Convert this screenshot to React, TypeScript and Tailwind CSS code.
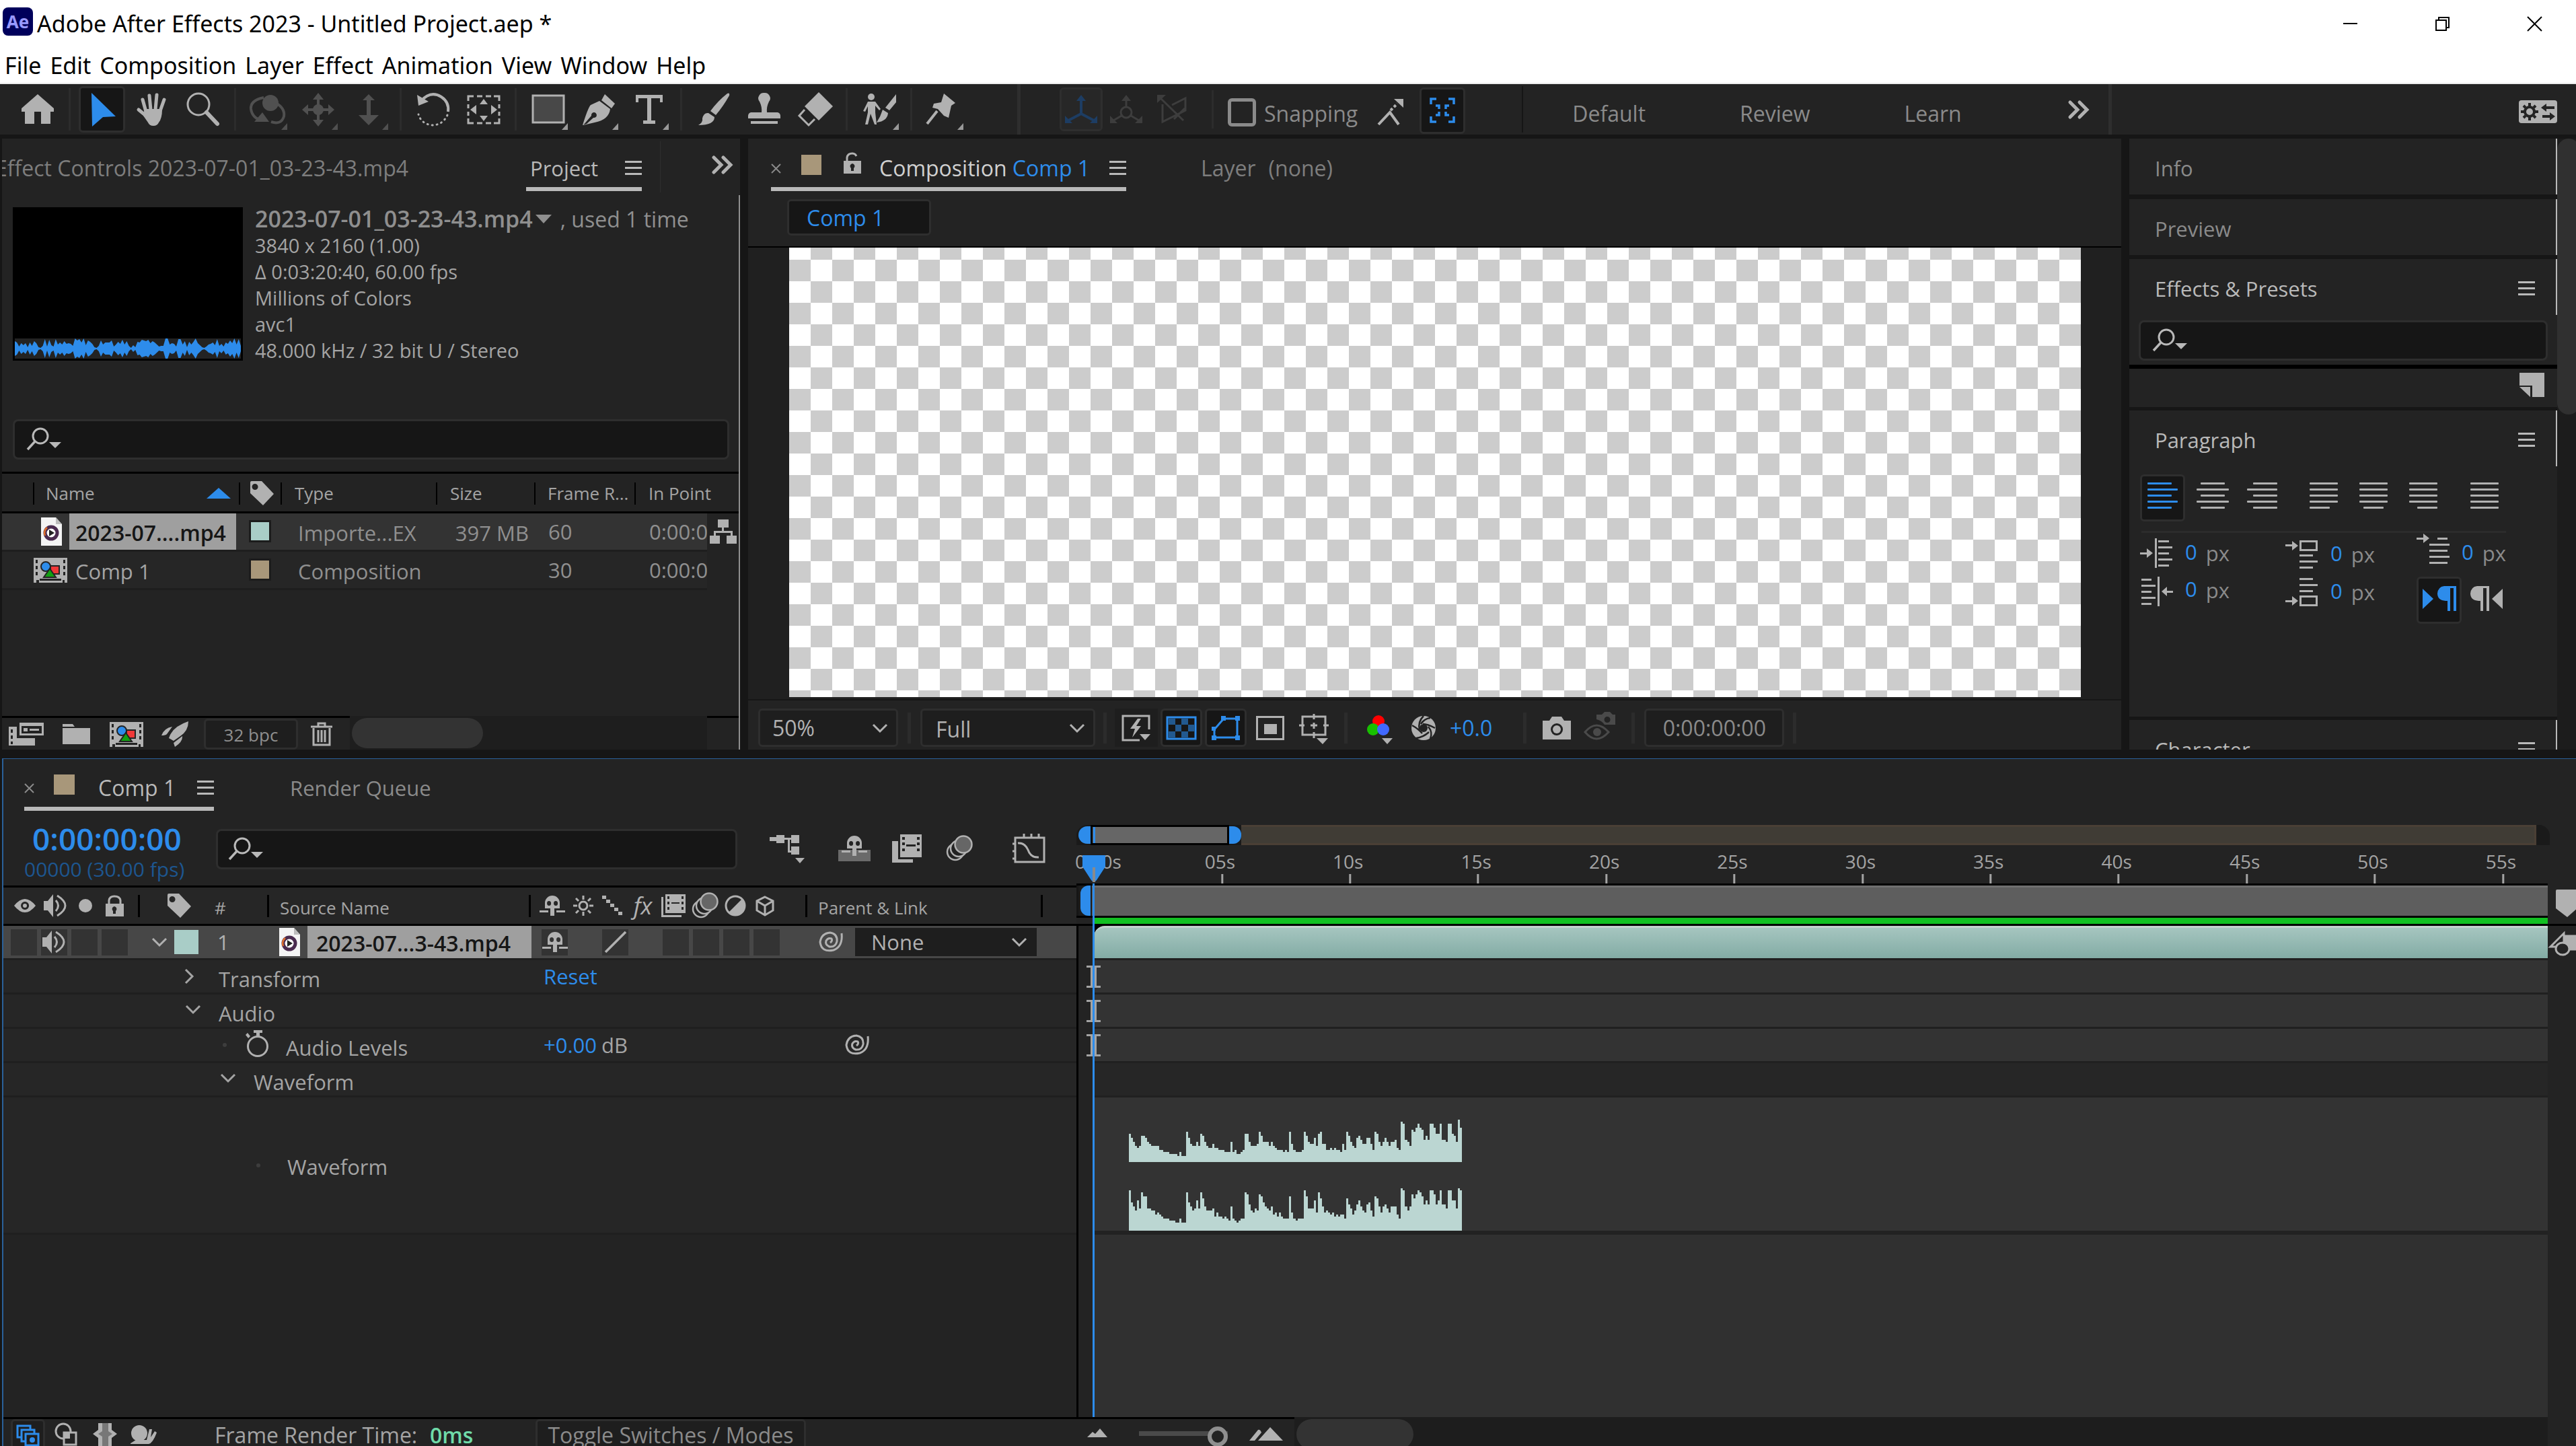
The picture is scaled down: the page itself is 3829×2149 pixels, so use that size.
import React, { useState } from 'react';

const MENUS = ['File', 'Edit', 'Composition', 'Layer', 'Effect', 'Animation', 'View', 'Window', 'Help'];

const LEFT_CHANNEL = [
  14, 12, 10, 8, 7, 8, 13, 13, 12, 10, 9, 8, 8, 8, 8, 6, 6, 5, 5, 5, 4, 4, 4, 4, 3, 5, 3, 3,
  15, 12, 9, 8, 8, 10, 8, 14, 13, 10, 8, 7, 7, 9, 7, 7, 6, 6, 6, 5, 5, 5, 10, 5, 6, 4, 4, 5, 6,
  14, 14, 10, 8, 8, 8, 9, 15, 13, 10, 10, 10, 8, 10, 8, 7, 6, 6, 6, 5, 6, 5, 15, 9, 6, 5, 5, 5, 6,
  15, 13, 10, 9, 9, 12, 8, 14, 15, 9, 9, 6, 6, 7, 6, 7, 6, 6, 5, 9, 6, 15, 13, 10, 8, 7, 12, 13, 11, 9,
  9, 12, 12, 9, 6, 15, 14, 10, 8, 10, 12, 10, 8, 10, 10, 11, 7, 6, 20, 19, 11, 10, 8, 16, 15, 17, 19, 17,
  16, 11, 13, 11, 19, 19, 17, 14, 14, 19, 11, 11, 10, 19, 19, 14, 13, 10, 21, 17,
];

const RIGHT_CHANNEL = [
  20, 14, 12, 10, 15, 11, 19, 17, 17, 11, 11, 10, 10, 8, 9, 8, 7, 6, 6, 6, 5, 5, 5, 4, 4, 6, 4, 4,
  19, 14, 12, 10, 11, 15, 11, 19, 16, 12, 10, 10, 10, 11, 7, 9, 7, 7, 6, 7, 6, 5, 12, 6, 5, 4, 5, 6, 6,
  19, 18, 13, 10, 9, 11, 10, 18, 17, 14, 12, 11, 10, 12, 8, 9, 7, 9, 7, 6, 6, 6, 17, 9, 6, 5, 6, 6, 6,
  20, 17, 11, 11, 11, 15, 9, 19, 16, 12, 9, 10, 9, 8, 9, 7, 8, 7, 8, 8, 6, 16, 13, 11, 8, 10, 13, 15, 12, 10,
  9, 13, 14, 10, 7, 17, 16, 12, 9, 12, 13, 11, 9, 12, 12, 12, 8, 6, 21, 20, 12, 10, 12, 18, 16, 18, 20, 19,
  17, 13, 15, 13, 20, 20, 18, 13, 15, 20, 13, 13, 11, 20, 20, 15, 15, 11, 21, 20,
];

const THUMB_WAVE = [
  11, 9, 3, 8, 5, 8, 2, 9, 4, 11, 8, 2, 1, 4, 14, 3, 13, 5, 3, 14, 6, 9, 6, 11, 7, 8, 7, 4, 15, 12, 14, 9, 15, 5,
  12, 10, 7, 2, 1, 4, 12, 6, 9, 9, 9, 12, 3, 6, 10, 7, 13, 6, 11, 4, 1, 5, 2, 10, 9, 13, 12, 11, 13, 8, 11, 9, 6,
  3, 4, 4, 15, 15, 6, 8, 7, 3, 14, 14, 6, 11, 2, 10, 6, 10, 15, 8, 5, 2, 1, 3, 6, 7, 9, 5, 14, 4, 7, 3, 9, 7, 12,
  8, 15, 6, 14, 4,
];

const SECONDS = [5, 10, 15, 20, 25, 30, 35, 40, 45, 50, 55];
const VISIBLE_SECONDS = 56.75;

const toClock = (s: number) => `${String(s).padStart(2, '0')}s`;

type SvgProps = { w: number; h: number; className?: string; children: React.ReactNode };

const Svg: React.FC<SvgProps> = ({ w, h, className = '', children }) => (
  <svg
    width={w}
    height={h}
    viewBox={`0 0 ${w} ${h}`}
    fill="currentColor"
    aria-hidden="true"
    className={`shrink-0 overflow-visible ${className}`}
  >
    {children}
  </svg>
);

const Burger = () => (
  <Svg w={25} h={22}>
    <path d="M0 0h25v3H0zM0 9h25v3H0zM0 18h25v3H0z" />
  </Svg>
);

const Cross = () => (
  <Svg w={15} h={15} className="text-[#8a8a8a]">
    <path d="M1 1l13 13M14 1L1 14" stroke="currentColor" strokeWidth="2" fill="none" />
  </Svg>
);

const Chevrons = () => (
  <Svg w={32} h={26} className="text-[#b1b1b1]">
    <path d="M3 2l11 11L3 24M17 2l11 11-11 11" stroke="currentColor" strokeWidth="5" fill="none" strokeLinecap="round" />
  </Svg>
);

const ChevronDown = ({ className = '' }: { className?: string }) => (
  <Svg w={24} h={14} className={className}>
    <path d="M2 2l10 10L22 2" stroke="currentColor" strokeWidth="3" fill="none" />
  </Svg>
);

const SearchGlyph = () => (
  <Svg w={52} h={34} className="text-[#b9b9b9]">
    <circle cx="20" cy="12" r="11" fill="none" stroke="currentColor" strokeWidth="3" />
    <path d="M12 20L1 32" stroke="currentColor" strokeWidth="3.5" />
    <path d="M33 21h18l-9 9z" />
  </Svg>
);

const Tag = () => (
  <Svg w={37} h={36} className="text-[#b1b1b1]">
    <path fillRule="evenodd" d="M1 2q0-2 2-2h15l18 19-16 17L1 18zm7 2a4.500 4.500 0 1 0 .1 9a4.500 4.500 0 0 0-.1-9z" />
  </Svg>
);

const MediaFile = () => (
  <Svg w={31} h={42}>
    <path d="M0 0h22l9 10v32H0z" fill="#f4f4f4" />
    <path d="M22 0l9 10h-9z" fill="#bdbdbd" />
    <circle cx="15" cy="23" r="9" fill="#fff" stroke="#4a2b4f" strokeWidth="5" />
    <path d="M6 27a10 10 0 0 1 3-12" stroke="#e2702c" strokeWidth="2.500" fill="none" />
    <path d="M12 18l8 5-8 5z" fill="#222" />
  </Svg>
);

const CompFile = () => (
  <Svg w={50} h={38} className="text-[#b1b1b1]">
    <path d="M0 1h50v37h-4v-4h-3v4H8v-4H4v4H0z" />
    <path d="M3 4h3v5H3zM3 13h3v5H3zM3 22h3v5H3zM44 4h3v5h-3zM44 13h3v5h-3zM44 22h3v5h-3zM9 32h32v3H9z" fill="#232323" />
    <path d="M25 13h13v12H25z" fill="#f03838" stroke="#232323" strokeWidth="2" />
    <circle cx="18" cy="14" r="7" fill="#2d8ceb" stroke="#232323" strokeWidth="2" />
    <path d="M24 17l9 13H15z" fill="#12a012" stroke="#232323" strokeWidth="2" />
  </Svg>
);

const Speaker = () => (
  <Svg w={36} h={34}>
    <path d="M0 10h6L14 0v34L6 24H0z" />
    <path d="M18 9q7 8 0 16M20 2q24 15 0 30" stroke="currentColor" strokeWidth="3" fill="none" />
  </Svg>
);

const Shy = () => (
  <Svg w={38} h={30}>
    <path fillRule="evenodd" d="M8 19v-8a11 11 0 0 1 22 0v8zm6-11a3 3.500 0 1 0 .1 7a3 3.500 0 0 0 0-7zm10 0a3 3.500 0 1 0 .1 7a3 3.500 0 0 0 0-7z" />
    <path d="M16 19h6v11h-6zM0 22h13v3H0zM25 22h13v3H25z" />
  </Svg>
);

const Film = () => (
  <Svg w={36} h={34}>
    <path fillRule="evenodd" d="M6 0h30v28H6zm3 3v4h3V3zm0 8v4h3v-4zm0 8v4h3v-4zM30 3v4h3V3zm0 8v4h3v-4zm0 8v4h3v-4zM15 12v2h12v-2z" />
    <path d="M0 4h3v27h27v3H0z" />
  </Svg>
);

const Blur = () => (
  <Svg w={40} h={38}>
    <circle cx="14" cy="24" r="12" fill="#232323" stroke="currentColor" strokeWidth="2.500" />
    <circle cx="19" cy="19" r="12" fill="#232323" stroke="currentColor" strokeWidth="2.500" />
    <circle cx="26" cy="13" r="12.500" fill="#666" stroke="currentColor" strokeWidth="2.500" />
  </Svg>
);

const Swirl = () => (
  <Svg w={35} h={30} className="text-[#b1b1b1]">
    <path
      d="M33 2q2 20-12 25Q3 31 1 15Q3 2 16 1Q27 3 26 14Q24 23 15 22Q8 19 10 13Q13 8 18 10Q20 13 16 16"
      fill="none"
      stroke="currentColor"
      strokeWidth="3"
    />
  </Svg>
);

const Corner = () => <path d="M57 45v10H48z" fill="#999" />;

const tools: Record<string, React.ReactNode> = {
  Home: <path d="M28 2l24 21v5h-5v18H33V28H23v18H9V28H4v-5z" />,
  Selection: <path d="M12 0l36 35-19 1-16 14z" fill="#2d8ceb" />,
  Hand: (
    <>
      <path d="M18 28L13 10M25 25L23 4M32 25l2-22M39 27l6-17M18 34L7 25" stroke="currentColor" strokeWidth="5" strokeLinecap="round" />
      <path d="M16 24h26q0 14-5 20q-2 5-8 5q-6 0-8-5L14 34z" />
    </>
  ),
  Zoom: (
    <>
      <circle cx="21" cy="17" r="16" fill="none" stroke="currentColor" strokeWidth="3" />
      <path d="M33 29l16 17" stroke="currentColor" strokeWidth="6" strokeLinecap="round" />
    </>
  ),
  Orbit: (
    <g color="#505050">
      <circle cx="32" cy="15" r="12" />
      <path d="M22 7Q2 11 3 24q2 14 17 17M40 15q14 8 12 20q-4 13-19 8" stroke="currentColor" strokeWidth="4" fill="none" />
      <path d="M20 29l10 14H8z" />
      <path d="M57 45v10H48z" />
    </g>
  ),
  Pan: (
    <g color="#505050">
      <circle cx="28" cy="25" r="8" />
      <path d="M28 8v34M11 25h34" stroke="currentColor" strokeWidth="4" />
      <path d="M28 0l8 10H20zM28 50l8-10H20zM4 25l9-8v16zM52 25l-9-8v16z" />
      <path d="M57 45v10H48z" />
    </g>
  ),
  Dolly: (
    <g color="#505050">
      <path d="M28 2l9 9h-6v22h12L28 48 13 33h12V11h-6z" />
      <path d="M57 45v10H48z" />
    </g>
  ),
  Rotate: (
    <>
      <path d="M10 12Q24-4 40 6q12 8 10 22" stroke="currentColor" strokeWidth="4" fill="none" />
      <path d="M4 3l2 16 15-6z" />
      <path d="M49 33Q42 48 26 48Q10 46 6 32" stroke="currentColor" strokeWidth="3" strokeDasharray="1 6" strokeLinecap="round" fill="none" />
    </>
  ),
  Anchor: (
    <>
      <path d="M5 12V5h8M43 5h8v7M5 38v7h8M43 45h8v-7M18 5h8M31 5h8M18 45h8M31 45h8M5 17v6M5 28v6M51 17v6M51 28v6" stroke="currentColor" strokeWidth="3" fill="none" />
      <path d="M28 9l6 8H22zM28 42l6-8H22zM8 25l9-7v14zM48 25l-9-7v14z" />
    </>
  ),
  Rectangle: (
    <>
      <path d="M5 4h46v40H5z" fill="#484848" stroke="currentColor" strokeWidth="3" />
      <Corner />
    </>
  ),
  Pen: (
    <>
      <path fillRule="evenodd" d="M29 12l16 12q-2 16-23 20L5 48l12-14a4 4 0 1 1 3 3L10 46L4 48q8-26 12-30z" />
      <path d="M37 2l15 14-5 7-15-12z" />
      <Corner />
    </>
  ),
  Type: (
    <>
      <path d="M8 3h40v11h-4V8H31v33h6v5H19v-5h6V8H12v6H8z" />
      <Corner />
    </>
  ),
  Brush: (
    <>
      <path d="M48 1q4-2 3 3Q42 20 31 33l-8-6Q34 12 48 1z" />
      <path d="M20 30l9 6q0 12-24 12q7-4 6-10q2-9 9-8z" />
    </>
  ),
  Stamp: <path d="M28 0a8 8 0 0 1 7 13q-4 8-3 16h16q5 1 4 9H4q-1-8 4-9h16q1-8-3-16A8 8 0 0 1 28 0zM8 42h40v4H8z" />,
  Eraser: (
    <>
      <path d="M34-1l21 21-21 21-21-21z" />
      <path d="M13 25L5 34l14 14 9-9" fill="none" stroke="currentColor" strokeWidth="3" />
    </>
  ),
  Roto: (
    <>
      <circle cx="16" cy="6" r="5" />
      <path d="M11 13h11l8 11-2 2-6-7v10l2 18h-3l-6-16-4 16H7l4-18v-9l-4 8-3-1z" />
      <path d="M53 2v12L43 26l-6-4zM33 25l8 5q-1 12-17 14q6-9 9-19z" />
      <Corner />
    </>
  ),
  Pin: (
    <>
      <path d="M28 1l17 14-6 4-4 18-7-3-9-10-8-2 2-6 11-2z" />
      <path d="M18 27L3 46" stroke="currentColor" strokeWidth="4" />
      <Corner />
    </>
  ),
};

const TOOL_GROUPS = [
  ['Home'],
  ['Selection', 'Hand', 'Zoom'],
  ['Orbit', 'Pan', 'Dolly'],
  ['Rotate', 'Anchor'],
  ['Rectangle', 'Pen', 'Type'],
  ['Brush', 'Stamp', 'Eraser'],
  ['Roto'],
  ['Pin'],
];

const TitleBar = () => (
  <header className="shrink-0 border-b-2 border-[#ececec] bg-white font-['Noto_Sans',sans-serif] text-[34px] leading-[46px] text-black">
    <div className="flex h-[70px] items-center pr-[51px] pl-1">
      <div className="mb-[6px] flex h-[42px] w-[45px] items-center justify-center rounded-lg bg-[#00005b] text-[26px] font-bold text-[#9999ff]">
        Ae
      </div>
      <h1 className="ml-[6px] flex-1">Adobe After Effects 2023 - Untitled Project.aep *</h1>
      <div className="flex items-center gap-[116px]">
        <button aria-label="Minimize">
          <Svg w={21} h={21}><path d="M0 9h21v2H0z" /></Svg>
        </button>
        <button aria-label="Restore">
          <Svg w={21} h={21}>
            <path d="M1 5h15v15H1zM5 5V1h15v15h-4" fill="none" stroke="currentColor" strokeWidth="2" />
          </Svg>
        </button>
        <button aria-label="Close">
          <Svg w={21} h={21}><path d="M0 0l21 21M21 0L0 21" stroke="currentColor" strokeWidth="2" /></Svg>
        </button>
      </div>
    </div>
    <nav className="flex h-[53px] items-center gap-[13px] pl-[7px]">
      {MENUS.map((m) => (
        <button key={m}>{m}</button>
      ))}
    </nav>
  </header>
);

const Divider = () => <span className="h-[63px] w-[3px] bg-[#2c2c2c]" />;

const Toolbar = () => {
  const [active, setActive] = useState('Selection');
  const [snapping, setSnapping] = useState(false);

  return (
    <div className="mb-[6px] flex h-[75px] shrink-0 items-center bg-[#232323] pl-[18px] text-[#b1b1b1]">
      <div className="flex items-center gap-[9px]">
        {TOOL_GROUPS.map((group, i) => (
          <React.Fragment key={group[0]}>
            {i > 0 && <Divider />}
            <div className="flex">
              {group.map((name) => (
                <button key={name} aria-label={`${name} Tool`} onClick={() => setActive(name)} className="flex w-[75px] justify-center">
                  <span
                    className={`flex h-[69px] w-[69px] items-center justify-center rounded-md border-[3px] ${
                      active === name ? 'border-[#2e2e2e] bg-[#161616]' : 'border-transparent'
                    }`}
                  >
                    <Svg w={56} h={50}>{tools[name]}</Svg>
                  </span>
                </button>
              ))}
            </div>
          </React.Fragment>
        ))}
      </div>

      <span className="ml-[72px] h-full w-[5px] bg-[#2e2e2e]" />

      <div className="ml-[58px] flex items-center">
        <button aria-label="Local Axis Mode" className="flex h-[65px] w-[64px] items-center justify-center rounded-md border-[3px] border-[#2e2e2e] bg-[#272727] text-[#1d3d63]">
          <Svg w={50} h={44}>
            <path d="M25 4v24M25 28L6 38M25 28l19 10" stroke="currentColor" strokeWidth="4" />
            <path d="M25 0l7 9H18zM1 42V31l11 11zM49 42V31L38 42z" />
          </Svg>
        </button>
        <button aria-label="World Axis Mode" className="flex w-[70px] justify-center text-[#3d3d3d]">
          <Svg w={50} h={44}>
            <path d="M25 4v14M18 31L6 38M32 31l12 7" stroke="currentColor" strokeWidth="3" />
            <circle cx="25" cy="26" r="8" fill="none" stroke="currentColor" strokeWidth="3" />
            <path d="M25 0l7 9H18zM1 42V31l11 11zM49 42V31L38 42z" />
          </Svg>
        </button>
        <button aria-label="View Axis Mode" className="flex w-[66px] justify-center text-[#3d3d3d]">
          <Svg w={44} h={44}>
            <path d="M5 5l34 33M8 14v26L42 23V5L22 15M25 36l16-16" fill="none" stroke="currentColor" strokeWidth="3" />
            <path d="M0 0h13L0 12z" />
          </Svg>
        </button>
      </div>
      <span className="mr-[21px] ml-[26px] h-[57px] w-[3px] bg-[#2c2c2c]" />

      <label className="flex items-center gap-3 text-[32px] leading-[42px] text-[#8a8a8a]">
        <input
          type="checkbox"
          checked={snapping}
          onChange={(e) => setSnapping(e.target.checked)}
          className="mt-[9px] h-[42px] w-[42px] appearance-none rounded-md border-[5px] border-[#8a8a8a] checked:bg-[#8a8a8a]"
        />
        <span className="mt-[12px]">Snapping</span>
      </label>
      <button aria-label="Snap to edges" className="mt-[6px] ml-[30px]">
        <Svg w={38} h={40}>
          <path d="M1 39L18 21l13 18" fill="none" stroke="currentColor" strokeWidth="4" />
          <path d="M19 18l10-10" stroke="currentColor" strokeWidth="4" strokeDasharray="4 3" />
          <path d="M24 1h14v13z" />
        </Svg>
      </button>
      <button aria-label="Snap to features" className="mt-[3px] ml-[24px] flex h-[69px] w-[68px] items-center justify-center rounded-md border-[3px] border-[#2e2e2e] bg-[#161616] text-[#2d8ceb]">
        <Svg w={38} h={38}>
          <path d="M2 10V2h8M28 2h8v8M2 28v8h8M28 36h8v-8M9 12h5v5M29 12h-5v5M9 26h5v-5M29 26h-5v-5" fill="none" stroke="currentColor" strokeWidth="3.500" />
        </Svg>
      </button>

      <span className="ml-[84px] h-[69px] w-[2px] bg-[#161616]" />
      <nav className="mt-[13px] ml-[73px] flex gap-[140px] text-[32px] leading-[42px] text-[#8a8a8a]">
        <button>Default</button>
        <button>Review</button>
        <button>Learn</button>
      </nav>
      <button aria-label="More workspaces" className="ml-[158px]">
        <Chevrons />
      </button>
      <span className="ml-[28px] h-full w-[5px] bg-[#2e2e2e]" />
      <div className="flex-1" />
      <button aria-label="Workspace settings" className="mt-[6px] mr-[28px]">
        <Svg w={57} h={34}>
          <rect width="57" height="34" rx="4" />
          <circle cx="16" cy="17" r="7" fill="none" stroke="#232323" strokeWidth="4" />
          <path d="M16 4v5M16 25v5M3 17h5M24 17h5M7 8l3 3M22 23l3 3M25 8l-3 3M7 26l3-3" stroke="#232323" strokeWidth="4" />
          <path d="M33 11l8-6v4h12v4H41v4zM54 24l-8-6v4H35v4h11v4z" fill="#232323" />
        </Svg>
      </button>
    </div>
  );
};

const PROJECT_ROWS = [
  { name: '2023-07....mp4', type: 'Importe...EX', size: '397 MB', rate: '60', start: '0:00:0', media: true },
  { name: 'Comp 1', type: 'Composition', size: '', rate: '30', start: '0:00:0', media: false },
];

const ProjectPanel = () => {
  const wave =
    THUMB_WAVE.map((v, i) => `${i * 3},${15 - v}`).join(' ') +
    ' ' +
    [...THUMB_WAVE].map((v, i) => `${i * 3},${15 + v}`).reverse().join(' ');

  return (
    <section className="flex w-[1097px] shrink-0 flex-col overflow-hidden bg-[#232323]">
      <div className="flex h-[84px] items-start text-[31px] leading-[42px]">
        <div className="flex h-[78px] w-[604px] items-center justify-end overflow-hidden pt-[10px] text-[32px] whitespace-nowrap text-[#7d7d7d]">
          Effect Controls 2023-07-01_03-23-43.mp4
        </div>
        <div className="ml-[175px] flex h-[78px] w-[172px] items-center justify-between border-b-[6px] border-[#b9b9b9] pt-[16px] pl-[6px] text-[#b9b9b9]">
          Project <Burger />
        </div>
        <span className="mt-1 ml-[27px] h-[76px] w-px bg-[#2e2e2e]" />
        <button aria-label="More tabs" className="mt-[26px] ml-[76px]">
          <Chevrons />
        </button>
      </div>

      <div className="flex min-h-0 flex-1 flex-col border-r-2 border-[#8f8f8f]">
        <div className="flex h-[333px] pt-[16px] pl-4">
          <div className="mt-[2px] flex h-[228px] w-[342px] flex-col justify-end bg-black px-[3px] pb-[3px]">
            <svg viewBox="0 0 315 30" preserveAspectRatio="none" className="h-[30px] w-full bg-[#232323]" aria-hidden="true">
              <polygon points={wave} fill="#2d8ceb" />
            </svg>
          </div>
          <div className="ml-[18px] text-[29px] leading-[39px] text-[#a4a4a4]">
            <p className="flex items-center text-[32px] text-[#8f8f8f]">
              <button className="flex items-center gap-1 text-[34px] font-semibold">
                2023-07-01_03-23-43.mp4
                <Svg w={24} h={13}><path d="M0 0h24L12 13z" /></Svg>
              </button>
              <span className="ml-[13px]">, used 1 time</span>
            </p>
            <p>3840 x 2160 (1.00)</p>
            <p>Δ 0:03:20:40, 60.00 fps</p>
            <p>Millions of Colors</p>
            <p>avc1</p>
            <p>48.000 kHz / 32 bit U / Stereo</p>
          </div>
        </div>

        <label className="mr-[14px] ml-4 flex h-[60px] items-center rounded-lg border-[3px] border-[#2e2e2e] bg-[#161616] pl-[18px]">
          <SearchGlyph />
          <input type="search" aria-label="Search project" className="w-full bg-transparent px-3 text-[31px] text-[#b9b9b9] outline-none" />
        </label>

        <div className="mt-[18px] min-h-0 flex-1 overflow-hidden border-t-[3px] border-black">
          <table className="w-full table-fixed border-collapse text-left">
            <colgroup>
              <col className="w-[354px]" />
              <col className="w-[62px]" />
              <col className="w-[231px]" />
              <col className="w-[146px]" />
              <col className="w-[149px]" />
              <col className="w-[106px]" />
              <col />
            </colgroup>
            <thead>
              <tr className="h-[57px] border-b-[3px] border-black text-[26px] leading-[34px] text-[#a4a4a4] [&>th]:p-0 [&>th]:pt-[3px] [&>th]:font-normal">
                <th scope="col">
                  <span className="ml-[46px] flex h-[33px] items-center justify-between border-r-2 border-l-2 border-black pr-[12px] pl-[17px]">
                    Name
                    <Svg w={36} h={16} className="text-[#2d8ceb]"><path d="M18 0l18 16H0z" /></Svg>
                  </span>
                </th>
                <th scope="col" aria-label="Label">
                  <span className="flex h-[33px] items-center border-r-2 border-black pl-[14px]"><Tag /></span>
                </th>
                <th scope="col"><span className="flex h-[33px] items-center border-r-2 border-black pl-[19px]">Type</span></th>
                <th scope="col"><span className="flex h-[33px] items-center border-r-2 border-black pl-[19px]">Size</span></th>
                <th scope="col"><span className="flex h-[33px] items-center border-r-2 border-black pl-[18px]">Frame R...</span></th>
                <th scope="col" colSpan={2}><span className="flex h-[33px] items-center pl-[19px]">In Point</span></th>
              </tr>
            </thead>
            <tbody>
              {PROJECT_ROWS.map((row) => (
                <tr
                  key={row.name}
                  className={`h-[57px] text-[31px] leading-[42px] text-[#8f8f8f] [&>td]:p-0 ${row.media ? 'bg-[#333333]' : 'bg-[#262626]'}`}
                >
                  <td className="border-b-[3px] border-[#1e1e1e]">
                    <div className="flex h-[54px] items-center">
                      <span className="flex w-[100px] items-center justify-end pr-[3px]">
                        {row.media ? <span className="mr-[8px]"><MediaFile /></span> : <CompFile />}
                      </span>
                      <span
                        className={`flex h-full w-[248px] items-center pt-1 pl-[9px] ${
                          row.media ? 'bg-[#9f9f9f] text-[32px] font-semibold text-[#161616]' : 'text-[#a4a4a4]'
                        }`}
                      >
                        {row.name}
                      </span>
                    </div>
                  </td>
                  <td className="border-b-[3px] border-[#1e1e1e]">
                    <span className={`ml-[13px] block h-[33px] w-[33px] border-[3px] border-[#1c1c1c] ${row.media ? 'bg-[#a9cdc7]' : 'bg-[#a8977a]'}`} />
                  </td>
                  <td className="border-b-[3px] border-[#1e1e1e]"><div className="pt-1 pl-[24px]">{row.type}</div></td>
                  <td className="border-b-[3px] border-[#1e1e1e]"><div className="pt-1 pr-[10px] text-right">{row.size}</div></td>
                  <td className="border-b-[3px] border-[#1e1e1e]"><div className="pl-[19px]">{row.rate}</div></td>
                  <td className="overflow-hidden border-b-[3px] border-[#1e1e1e]"><div className="pl-[20px]">{row.start}</div></td>
                  <td className="bg-[#232323] text-[#b1b1b1]">
                    {row.media && (
                      <button aria-label="Flowchart" className="flex w-full justify-center">
                        <Svg w={40} h={36}>
                          <path d="M12 0h16v12H12zM0 24h15v12H0zM25 24h15v12H25zM18 12h3v5h13v7h-3v-4H9v4H6v-7h12z" />
                        </Svg>
                      </button>
                    )}
                  </td>
                </tr>
              ))}
            </tbody>
          </table>
        </div>

        <div className="flex h-[50px] shrink-0 text-[#b1b1b1]">
          <div className="flex w-[517px] items-center border-t-[3px] border-black pl-[10px]">
            <button aria-label="Interpret Footage">
              <Svg w={52} h={34}>
                <path fillRule="evenodd" d="M16 0h36v19H16zm3 5v11h30V5z" />
                <path d="M22 8h6v5h-6zM31 9h14v3H31zM0 6h12v17h27v11H0z" />
                <path d="M3 10h3v5H3zM3 19h3v5H3zM3 28h3v4H3z" fill="#232323" />
              </Svg>
            </button>
            <button aria-label="New Folder" className="ml-[28px]">
              <Svg w={41} h={30}><path d="M0 0h15l3 4H0zM0 6h41v24H0z" /></Svg>
            </button>
            <button aria-label="New Composition" className="ml-[29px]"><CompFile /></button>
            <button aria-label="Project Settings" className="ml-[27px]">
              <Svg w={40} h={38}>
                <path d="M40 0q0 14-12 22L18 29l-7-4Q16 8 40 0zM16 8Q4 10 0 21q6 0 8-2zM31 22q1 8-11 16l-2-6z" />
              </Svg>
            </button>
            <button className="ml-[23px] h-[46px] w-[140px] rounded-md border-[3px] border-[#2e2e2e] bg-[#1e1e1e] pt-[3px] text-[26px] leading-[36px] text-[#8f8f8f]">
              32 bpc
            </button>
            <button aria-label="Delete" className="ml-[18px]">
              <Svg w={34} h={36}>
                <path d="M5 9v25h24V9M1 7h32M12 6V2h10v4M12 12v18M17 12v18M22 12v18" fill="none" stroke="currentColor" strokeWidth="3" />
              </Svg>
            </button>
          </div>
          <div className="flex w-[531px] items-center bg-[#1e1e1e] pl-[3px]">
            <span className="h-[45px] w-[195px] rounded-full bg-[#333333]" />
          </div>
          <div className="flex-1 border-t-[3px] border-black" />
        </div>
      </div>
    </section>
  );
};

const Bar = () => <span className="h-[46px] w-[5px] bg-[#2c2c2c]" />;

const CompositionPanel = () => (
  <section className="flex min-w-0 flex-1 flex-col bg-[#232323]">
    <div className="flex h-[84px] pl-[34px] text-[32px] leading-[42px]">
      <div className="flex h-[78px] w-[528px] items-center border-b-[6px] border-[#b9b9b9] pt-[16px] text-[#d0d0d0]">
        <button aria-label="Close tab"><Cross /></button>
        <span className="mb-[10px] ml-[30px] h-[30px] w-[30px] bg-[#a8977a]" />
        <Svg w={26} h={32} className="mb-[16px] ml-[33px] text-[#b1b1b1]">
          <path fillRule="evenodd" d="M0 13h26v19H0zm13 4a4 4 0 0 0-2 7v4h4v-4a4 4 0 0 0-2-7z" />
          <path d="M5 13V8q1-6 8-6q4 0 6 4" fill="none" stroke="currentColor" strokeWidth="3" />
        </Svg>
        <span className="ml-[27px]">Composition <span className="text-[#2d8ceb]">Comp 1</span></span>
        <span className="ml-auto text-[#b9b9b9]"><Burger /></span>
      </div>
      <div className="ml-[111px] flex h-[78px] items-center gap-[19px] pt-[10px] text-[#7d7d7d]">
        <span>Layer</span>
        <span>(none)</span>
      </div>
    </div>

    <div className="h-[76px] pt-[6px] pl-[58px]">
      <button className="h-[54px] w-[214px] rounded-md border-[3px] border-[#2e2e2e] bg-[#161616] pl-[26px] text-left text-[32px] leading-[50px] text-[#2d8ceb]">
        Comp 1
      </button>
    </div>

    <div className="min-h-0 flex-1 border-t-2 border-b-2 border-t-black border-b-[#161616] bg-[#202020] pr-[60px] pb-[3px] pl-[61px]">
      <div className="h-full bg-[conic-gradient(#cccccc_25%,#ffffff_0_50%,#cccccc_0_75%,#ffffff_0)] bg-[length:64px_64px] bg-[position:0_-14px]" />
    </div>

    <div className="flex h-[73px] items-center pt-[8px] pl-[15px] text-[32px] leading-[42px] text-[#b1b1b1]">
      <div className="relative flex items-center">
        <select aria-label="Magnification ratio" className="h-[57px] w-[208px] appearance-none rounded-md border-[3px] border-[#2e2e2e] bg-[#1e1e1e] pl-[18px]">
          <option>50%</option>
          <option>100%</option>
        </select>
        <ChevronDown className="pointer-events-none absolute right-[15px]" />
      </div>
      <span className="w-[14px]" />
      <Bar />
      <span className="w-[14px]" />
      <div className="relative flex items-center">
        <select aria-label="Resolution" className="h-[57px] w-[260px] appearance-none rounded-md border-[3px] border-[#2e2e2e] bg-[#1e1e1e] pt-[4px] pl-[20px]">
          <option>Full</option>
          <option>Half</option>
        </select>
        <ChevronDown className="pointer-events-none absolute right-[15px]" />
      </div>
      <span className="w-[12px]" />
      <Bar />
      <button aria-label="Fast Previews" className="ml-[12px] flex h-[57px] w-[64px] items-center justify-center bg-[#1e1e1e]">
        <Svg w={44} h={40}>
          <path d="M41 22V2H2v36h25" fill="none" stroke="currentColor" strokeWidth="3" />
          <path d="M24 6L13 21h7l-4 13 13-17h-7l7-11zM27 29h16l-8 9z" />
        </Svg>
      </button>
      <button aria-label="Transparency Grid" className="ml-[4px] flex h-[57px] w-[62px] items-center justify-center rounded-md border-[3px] border-[#2e2e2e] bg-[#161616] text-[#2d8ceb]">
        <Svg w={44} h={34}>
          <path d="M1 1h42v32H1z" fill="#161616" stroke="currentColor" strokeWidth="3" />
          <path d="M3 3h10v9H3zM22 3h10v9H22zM13 12h9v10h-9zM32 12h9v10h-9zM3 22h10v9H3zM22 22h10v9H22z" fill="#22598f" />
        </Svg>
      </button>
      <button aria-label="Mask Visibility" className="ml-[4px] flex h-[57px] w-[62px] items-center justify-center rounded-md border-[3px] border-[#2e2e2e] bg-[#161616] text-[#2d8ceb]">
        <Svg w={42} h={36}>
          <path d="M4 32V20L18 4h20v28z" fill="none" stroke="currentColor" strokeWidth="3" />
          <path d="M0 29h7v7H0zM35 29h7v7h-7zM35 0h7v7h-7zM14 0h7v7h-7zM0 16h6v6H0z" />
        </Svg>
      </button>
      <button aria-label="Region of Interest" className="ml-[14px]">
        <Svg w={42} h={36}>
          <path fillRule="evenodd" d="M0 0h42v36H0zm3 3v30h36V3z" />
          <path d="M12 12h19v15H12z" />
        </Svg>
      </button>
      <button aria-label="Grid and Guides" className="ml-[22px]">
        <Svg w={44} h={42}>
          <path d="M5 4h34v27H5zM22 0v8M22 13v9M22 27v9M0 17h8M17 17h10M36 17h8" fill="none" stroke="currentColor" strokeWidth="3" />
          <path d="M26 36h17l-8 9z" />
        </Svg>
      </button>
      <span className="w-[23px]" />
      <Bar />
      <button aria-label="Show Channel" className="ml-[28px]">
        <Svg w={36} h={42}>
          <circle cx="18" cy="11" r="9" fill="#ff0000" />
          <circle cx="10" cy="23" r="9" fill="#18c000" />
          <circle cx="25" cy="23" r="9" fill="#4169ff" />
          <path d="M23 36h16l-8 9z" />
        </Svg>
      </button>
      <button aria-label="Reset Exposure" className="ml-[30px]">
        <Svg w={38} h={38}>
          <circle cx="19" cy="19" r="18" />
          <circle cx="19" cy="19" r="6" fill="#232323" />
          <path d="M19 1q-9 9-6 21M2 15q9 5 15 12M8 34q10-1 19-9M29 35q4-10-3-18M36 19q-11-6-18-6M29 4q-9 1-14 9" fill="none" stroke="#232323" strokeWidth="2.500" />
        </Svg>
      </button>
      <button className="ml-[20px] text-[#2d8ceb]">+0.0</button>
      <span className="w-[46px]" />
      <Bar />
      <button aria-label="Take Snapshot" className="ml-[24px]">
        <Svg w={42} h={34}>
          <path fillRule="evenodd" d="M0 6h10l4-6h14l4 6h10v28H0zm21 4a9 9 0 1 0 .1 18a9 9 0 0 0 0-18z" />
          <circle cx="21" cy="19" r="6" />
        </Svg>
      </button>
      <button aria-label="Show Snapshot" className="mb-[6px] ml-[20px] text-[#4a4a4a]">
        <Svg w={48} h={40}>
          <path d="M1 29q17-20 35 0q-18 20-35 0z" fill="none" stroke="currentColor" strokeWidth="3" />
          <circle cx="19" cy="29" r="6" />
          <path fillRule="evenodd" d="M18 3h8l4-4h8l4 4h4v15h-16q-4-6-12-8zm16 3a4 4 0 1 0 .1 9a4 4 0 0 0 0-9z" />
        </Svg>
      </button>
      <span className="w-[22px]" />
      <Bar />
      <button className="ml-[14px] h-[57px] w-[208px] rounded-md border-[3px] border-[#2e2e2e] bg-[#1e1e1e] text-[#8a8a8a]">
        0:00:00:00
      </button>
      <span className="w-[13px]" />
      <Bar />
    </div>
  </section>
);

// Each paragraph icon is five strokes given as [start, end].
const ALIGNMENTS = [
  { name: 'Left align', lines: [[0, 36], [0, 45], [0, 36], [0, 45], [0, 36]] },
  { name: 'Center', lines: [[6, 42], [0, 48], [6, 42], [0, 48], [6, 42]] },
  { name: 'Right align', lines: [[9, 45], [0, 45], [9, 45], [0, 45], [9, 45]] },
  { name: 'Justify last left', lines: [[0, 42], [0, 42], [0, 42], [0, 42], [0, 30]] },
  { name: 'Justify last centered', lines: [[0, 42], [0, 42], [0, 42], [0, 42], [6, 36]] },
  { name: 'Justify last right', lines: [[0, 42], [0, 42], [0, 42], [0, 42], [12, 42]] },
  { name: 'Justify all', lines: [[0, 42], [0, 42], [0, 42], [0, 42], [0, 42]] },
];

const Indent = ({ label, icon }: { label: string; icon: React.ReactNode }) => (
  <div className="flex items-center text-[31px] leading-[40px]">
    <Svg w={48} h={46}>{icon}</Svg>
    <button aria-label={label} className="mb-[4px] ml-[19px] text-[#2d8ceb]">0</button>
    <span className="ml-[13px] text-[#8a8a8a]">px</span>
  </div>
);

const PanelHeader = ({ title, menu = false }: { title: string; menu?: boolean }) => (
  <div className="flex h-[83px] shrink-0 items-center justify-between border-r-2 border-[#b9b9b9] pt-[4px] pr-[31px] pl-[38px] text-[31px] leading-[42px]">
    <h2 className={menu ? 'text-[#b9b9b9]' : 'text-[#8a8a8a]'}>{title}</h2>
    {menu && (
      <button aria-label={`${title} menu`} className="text-[#b9b9b9]">
        <Burger />
      </button>
    )}
  </div>
);

const SidePanels = () => {
  const [align, setAlign] = useState('Left align');

  return (
    <aside className="flex w-[664px] shrink-0">
      <div className="flex w-[636px] flex-col overflow-hidden text-[#b9b9b9]">
        <div className="mb-[7px] shrink-0 bg-[#232323]"><PanelHeader title="Info" /></div>
        <div className="mb-[6px] shrink-0 bg-[#232323]"><PanelHeader title="Preview" /></div>
        <div className="mb-[5px] shrink-0 bg-[#232323]">
          <PanelHeader title="Effects & Presets" menu />
          <label className="mx-[14px] mt-[8px] flex h-[60px] items-center rounded-lg border-[3px] border-[#2e2e2e] bg-[#161616] pl-[18px]">
            <SearchGlyph />
            <input type="search" aria-label="Search effects" className="w-full bg-transparent px-3 text-[31px] outline-none" />
          </label>
          <div className="mt-[6px] flex h-[63px] items-center justify-end border-t-[6px] border-black pr-[19px]">
            <button aria-label="New bin" className="mb-[10px]">
              <Svg w={37} h={36} className="text-[#b1b1b1]">
                <path d="M0 0h37v36H19V19H0zM0 21h16v15z" />
              </Svg>
            </button>
          </div>
        </div>
        <div className="mb-[5px] h-[455px] shrink-0 bg-[#232323]">
          <PanelHeader title="Paragraph" menu />
          <div className="mt-[12px] flex items-center pl-[16px]">
            {ALIGNMENTS.map((a, i) => (
              <button
                key={a.name}
                aria-label={a.name}
                onClick={() => setAlign(a.name)}
                className={`flex h-[70px] w-[67px] items-center justify-center rounded-md border-[3px] ${i === 3 || i === 6 ? 'ml-[24px]' : i > 0 ? 'ml-[7px]' : ''} ${
                  align === a.name ? 'border-[#2e2e2e] bg-[#161616] text-[#2d8ceb]' : 'border-transparent text-[#b1b1b1]'
                }`}
              >
                <Svg w={a.lines[1][1]} h={46}>
                  {a.lines.map(([from, to], n) => (
                    <rect key={n} x={from} y={n * 9} width={to - from} height="3" rx="1" />
                  ))}
                </Svg>
              </button>
            ))}
          </div>
          <hr className="mt-[14px] mr-[76px] ml-[18px] border-t-[3px] border-[#2c2c2c]" />
          <div className="flex pt-[7px] pl-[16px] text-[#b1b1b1]">
            <div className="w-[216px]">
              <Indent
                label="Indent left margin"
                icon={
                  <>
                    <path d="M22 1h3v44h-3zM27 4h16v3H27zM27 13h21v3H27zM27 22h16v3H27zM27 31h21v3H27zM27 40h16v3H27z" />
                    <path d="M0 22h10v-6l9 7-9 7v-5H0z" />
                  </>
                }
              />
              <div className="mt-[9px]">
                <Indent
                  label="Indent right margin"
                  icon={
                    <>
                      <path d="M26 3h3v44h-3zM2 6h15v3H2zM2 15h21v3H2zM2 24h15v3H2zM2 33h21v3H2zM2 42h15v3H2z" />
                      <path d="M49 24H40v-6l-8 7 8 7v-5h9z" />
                    </>
                  }
                />
              </div>
            </div>
            <div className="w-[195px] pt-[2px]">
              <Indent
                label="Add space before paragraph"
                icon={
                  <>
                    <path fillRule="evenodd" d="M21 2h27v16H21zm3 3v10h21V5zM21 23h20v3H21zM21 32h27v3H21zM21 41h20v3H21z" />
                    <path d="M0 8h10V3l9 7-9 7v-6H0z" />
                  </>
                }
              />
              <div className="mt-[10px]">
                <Indent
                  label="Add space after paragraph"
                  icon={
                    <>
                      <path fillRule="evenodd" d="M21 28h27v16H21zm3 3v10h21V31zM21 2h20v3H21zM21 11h27v3H21zM21 20h20v3H21z" />
                      <path d="M0 35h10v-6l9 7-9 7v-5H0z" />
                    </>
                  }
                />
              </div>
            </div>
            <div>
              <Indent
                label="Indent first line"
                icon={
                  <>
                    <path d="M31 0h15v3H31zM19 9h30v3H19zM19 18h27v3H19zM19 27h30v3H19zM19 36h27v3H19z" />
                    <path d="M0 0h10v-6l9 7-9 7V3H0z" />
                  </>
                }
              />
              <div className="mt-[12px] flex items-center gap-[12px]">
                <button aria-label="Left-to-right text" className="flex h-[70px] w-[67px] items-center justify-center rounded-md border-[3px] border-[#2e2e2e] bg-[#161616] text-[#2d8ceb]">
                  <Svg w={50} h={42}>
                    <path d="M0 4l16 15L0 34zM32 0h18v37h-4V3h-5v34h-4V22h-3q-12-1-12-11Q23 1 32 0z" />
                  </Svg>
                </button>
                <button aria-label="Right-to-left text" className="flex items-center">
                  <Svg w={50} h={42}>
                    <path d="M49 4L33 19l16 15zM11 0h18v37h-4V3h-5v34h-4V22h-3Q1 21 1 11Q2 1 11 0z" />
                  </Svg>
                </button>
              </div>
            </div>
          </div>
        </div>
        <div className="shrink-0 bg-[#232323]"><PanelHeader title="Character" menu /></div>
      </div>
      <div className="w-[28px] overflow-hidden bg-[#1c1c1c]">
        <span className="block h-[410px] w-[34px] rounded-full bg-[#303030]" />
      </div>
    </aside>
  );
};

const Cell = ({ children, empty = false }: { children?: React.ReactNode; empty?: boolean }) => (
  <span className={`flex h-[39px] w-[39px] items-center justify-center ${empty ? '' : 'bg-[#333333]'}`}>{children}</span>
);

const HeaderBar = () => <span className="h-[33px] w-[3px] shrink-0 bg-black" />;

const PropertyRow = ({ indent, children }: { indent: string; children: React.ReactNode }) => (
  <div className={`flex h-[51px] items-center border-b-[3px] border-[#1f1f1f] bg-[#262626] text-[#a4a4a4] ${indent}`}>{children}</div>
);

const LayerList = () => (
  <div className="flex w-[1595px] shrink-0 flex-col text-[31px] leading-[42px]">
    <div className="flex h-[111px] text-[#b1b1b1]">
      <div className="w-[316px] pt-[15px]">
        <p className="pl-[43px] text-[46px] leading-[52px] font-semibold text-[#2d8ceb]">0:00:00:00</p>
        <p className="pl-[31px] text-[30px] leading-[39px] whitespace-nowrap text-[#1d5690]">00000 (30.00 fps)</p>
      </div>
      <label className="mt-[27px] flex h-[60px] w-[775px] items-center rounded-lg border-[3px] border-[#2e2e2e] bg-[#161616] pl-[16px]">
        <SearchGlyph />
        <input type="search" aria-label="Search layers" className="w-full bg-transparent px-3 outline-none" />
      </label>
      <div className="ml-[48px] flex h-[112px] items-center">
        <button aria-label="Mini-Flowchart">
          <Svg w={52} h={40}>
            <path d="M0 3h12v6H0zM10 0h12v12H10zM32 0h12v12H32zM22 4h10v3H22zM27 6h3v17h4v3h-7zM32 17h12v12H32zM38 34h14l-7 8z" />
          </Svg>
        </button>
        <button aria-label="Hide shy layers" className="ml-[50px] flex h-[38px] w-[48px] justify-center bg-[linear-gradient(transparent_55%,#6a6a6a_0)]"><Shy /></button>
        <button aria-label="Frame blending" className="ml-[32px]">
          <Svg w={44} h={42}>
            <path fillRule="evenodd" d="M12 0h32v34H12zm3 4v4h4V4zm0 8v4h4v-4zm0 9v4h4v-4zM37 4v4h4V4zm0 8v4h4v-4zm0 9v4h4v-4zM21 15v3h14v-3z" />
            <path d="M0 10h9v27h22v5H0z" />
          </Svg>
        </button>
        <button aria-label="Motion blur" className="ml-[36px]"><Blur /></button>
        <button aria-label="Graph Editor" className="ml-[59px]">
          <Svg w={50} h={44}>
            <path d="M4 6h43v36H4z" fill="none" stroke="currentColor" strokeWidth="3" />
            <path d="M8 14q10-1 15 10q4 12 16 11M17 0v6M28 0v6M39 0v6M0 15h4M0 26h4M0 37h4" fill="none" stroke="currentColor" strokeWidth="3" />
          </Svg>
        </button>
      </div>
    </div>

    <div className="flex h-[60px] items-center border-y-[3px] border-black bg-[#262626] text-[26px] leading-[34px] text-[#a4a4a4]">
      <div className="flex w-[200px] items-center pl-[16px] text-[#b1b1b1]">
        <Svg w={32} h={20}>
          <path fillRule="evenodd" d="M0 10q16-20 32 0q-16 20-32 0zm16-6a6 6 0 1 0 .1 12a6 6 0 0 0 0-12z" />
          <circle cx="16" cy="10" r="3" />
        </Svg>
        <span className="ml-[12px]"><Speaker /></span>
        <Svg w={20} h={20} className="ml-[16px]"><circle cx="10" cy="10" r="10" /></Svg>
        <Svg w={27} h={32} className="ml-[20px]">
          <path fillRule="evenodd" d="M0 13h27v19H0zm13 4a4 4 0 0 0-2 7v4h4v-4a4 4 0 0 0-2-7z" />
          <path d="M5 13V8q1-6 8-6q8 0 9 6v5" fill="none" stroke="currentColor" strokeWidth="3" />
        </Svg>
      </div>
      <HeaderBar />
      <span className="ml-[40px]"><Tag /></span>
      <span className="ml-[16px]"><HeaderBar /></span>
      <span className="ml-[18px] w-[78px] pt-[5px]">#</span>
      <HeaderBar />
      <span className="ml-[16px] w-[370px] pt-[5px]">Source Name</span>
      <HeaderBar />
      <div className="ml-[13px] flex w-[395px] items-center text-[#b1b1b1]">
        <Shy />
        <Svg w={30} h={30} className="ml-[12px]">
          <circle cx="15" cy="15" r="6" fill="none" stroke="currentColor" strokeWidth="3" />
          <path d="M15 0v6M15 24v6M0 15h6M24 15h6M4 4l4 4M22 22l4 4M26 4l-4 4M4 26l4-4" stroke="currentColor" strokeWidth="3" />
        </Svg>
        <Svg w={32} h={30} className="ml-[13px]">
          <path d="M0 0h6v5H0zM6 6h6v5H6zM12 12h6v5h-6zM18 18h6v5h-6zM24 24h6v5h-6z" />
        </Svg>
        <span className="ml-[10px] w-[37px] text-center text-[35px] leading-[34px] italic">fx</span>
        <span className="ml-[9px]"><Film /></span>
        <span className="ml-[9px]"><Blur /></span>
        <Svg w={32} h={30} className="ml-[9px]">
          <circle cx="16" cy="15" r="14" fill="none" stroke="currentColor" strokeWidth="3" />
          <path d="M26 5A14 14 0 0 1 6 25z" />
        </Svg>
        <Svg w={30} h={30} className="ml-[13px]">
          <path d="M15 2l12 6v14l-12 7-12-7V8zM3 8l12 7 12-7M15 15v14" fill="none" stroke="currentColor" strokeWidth="3" />
        </Svg>
      </div>
      <HeaderBar />
      <span className="ml-[16px] w-[331px] pt-[5px]">Parent &amp; Link</span>
      <HeaderBar />
    </div>

    <div className="flex h-[51px] items-center border-b-[3px] border-[#1f1f1f] bg-[#474747] text-[#b1b1b1]">
      <div className="flex gap-[6px] pl-[11px]">
        <Cell />
        <Cell><Speaker /></Cell>
        <Cell />
        <Cell />
      </div>
      <button aria-label="Collapse layer" className="ml-[35px]"><ChevronDown /></button>
      <span className="ml-[10px] h-[36px] w-[36px] bg-[#a9cdc7]" />
      <span className="ml-[28px] w-[92px]">1</span>
      <MediaFile />
      <span className="ml-[11px] flex h-full w-[333px] items-center bg-[#9f9f9f] pt-[4px] pl-[13px] text-[32px] font-semibold text-[#161616]">
        2023-07...3-43.mp4
      </span>
      <div className="ml-[15px] flex gap-[6px]">
        <Cell><Shy /></Cell>
        <Cell empty />
        <Cell>
          <Svg w={34} h={34}><path d="M2 32L32 2" stroke="currentColor" strokeWidth="3.500" /></Svg>
        </Cell>
        <Cell empty />
        <Cell />
        <Cell />
        <Cell />
        <Cell />
      </div>
      <button aria-label="Parent pick whip" className="ml-[59px]"><Swirl /></button>
      <div className="relative ml-[18px] flex items-center">
        <select aria-label="Parent layer" className="h-[42px] w-[270px] appearance-none bg-[#1e1e1e] pl-[24px]">
          <option>None</option>
        </select>
        <ChevronDown className="pointer-events-none absolute right-[14px]" />
      </div>
    </div>

    <PropertyRow indent="pl-[270px]">
      <Svg w={14} h={22}><path d="M1 1l10 10L1 21" fill="none" stroke="currentColor" strokeWidth="3" /></Svg>
      <span className="ml-[36px] w-[483px] pt-[8px]">Transform</span>
      <button className="text-[#2d8ceb]">Reset</button>
    </PropertyRow>
    <PropertyRow indent="pl-[270px]">
      <ChevronDown className="mb-[4px]" />
      <span className="ml-[26px] pt-[8px]">Audio</span>
    </PropertyRow>
    <PropertyRow indent="pl-[326px]">
      <span className="h-[6px] w-[6px] rounded-full bg-[#3d3d3d]" />
      <Svg w={36} h={40} className="mb-[4px] ml-[28px] text-[#b1b1b1]">
        <circle cx="18" cy="24" r="14.500" fill="none" stroke="currentColor" strokeWidth="3" />
        <path d="M12 0h13v4H12zM16 3h5v7h-5zM3 4l4 5-3 3-4-5z" />
      </Svg>
      <span className="ml-[24px] w-[383px] pt-[8px]">Audio Levels</span>
      <button className="text-[#2d8ceb]">+0.00</button>
      <span className="ml-[7px] w-[363px]">dB</span>
      <Swirl />
    </PropertyRow>
    <PropertyRow indent="pl-[322px]">
      <ChevronDown className="mb-[4px]" />
      <span className="ml-[26px] pt-[8px]">Waveform</span>
    </PropertyRow>
    <div className="flex h-[204px] items-center border-b-[3px] border-[#1f1f1f] bg-[#262626] pl-[376px] text-[#a4a4a4]">
      <span className="h-[6px] w-[6px] rounded-full bg-[#3d3d3d]" />
      <span className="ml-[40px] pt-[4px]">Waveform</span>
    </div>
    <div className="flex-1" />
  </div>
);

const Channel = ({ bars }: { bars: number[] }) => (
  <svg
    viewBox={`0 0 ${bars.length * 3} 66`}
    preserveAspectRatio="none"
    fill="#bbd6d2"
    shapeRendering="crispEdges"
    aria-hidden="true"
    className="h-[66px] w-[495px]"
  >
    {bars.map((v, i) => (
      <rect key={i} x={i * 3} y={66 - v * 3} width="3" height={v * 3} />
    ))}
  </svg>
);

const KeyBar = () => (
  <Svg w={22} h={33} className="-ml-[11px] text-[#a4a4a4]">
    <path d="M0 0h21v3h-6v27h6v3H0v-3h6V3H0z" />
  </Svg>
);

const TrackRow = () => (
  <div className="flex h-[51px] items-center border-b-[3px] border-[#202020] bg-[#333333]">
    <KeyBar />
  </div>
);

const Tracks = () => (
  <div className="flex min-w-0 flex-1 flex-col">
    <div className="mt-[21px] mr-[39px] flex h-[30px] rounded-t-2xl bg-[#1a1a1a] pr-[20px]">
      <span className="my-[2px] ml-[3px] w-[18px] rounded-l-full bg-[#2d8ceb]" />
      <span className="w-[206px] border-[3px] border-black bg-[#666666]">
        <span className="ml-[1px] block h-full w-[3px] bg-[#2d8ceb]" />
      </span>
      <span className="my-[2px] w-[18px] rounded-r-xl bg-[#2d8ceb]" />
      <span className="flex-1 border-[3px] border-l-0 border-[#4a3f35] bg-[#403c35]" />
    </div>

    <div className="flex min-h-0 flex-1">
      <div className="flex min-w-0 flex-1 flex-col">
        <div className="relative ml-[26px] h-[57px] text-[28px] leading-[36px] text-[#a4a4a4]">
          <span className="absolute top-[6px] -left-[28px] whitespace-nowrap">0:00s</span>
          {SECONDS.map((s) => (
            <span
              key={s}
              className="absolute top-[6px] bottom-0 flex -translate-x-1/2 flex-col items-center justify-between"
              style={{ left: `${(s / VISIBLE_SECONDS) * 100}%` }}
            >
              <span className="mr-[6px]">{toClock(s)}</span>
              <span className="h-[14px] w-[3px] bg-[#a4a4a4]" />
            </span>
          ))}
          <Svg w={34} h={40} className="absolute top-[15px] -left-[17px] z-10 text-[#2d8ceb]">
            <path d="M0 0h34v17L21 37q-4 5-8 0L0 17z" />
            <path d="M15 18h4v22h-4z" fill="#8a8a8a" />
          </Svg>
        </div>

        <div className="flex h-[51px] border-y-[3px] border-black bg-[#5e5e5e]">
          <span className="w-[3px] bg-[#161616]" />
          <span className="flex w-[20px] bg-[#1c1c1c] pl-[3px]"><span className="w-[15px] rounded-l-xl bg-[#2d8ceb]" /></span>
          <span className="flex-1 border-t-[3px] border-[#707070]" />
        </div>
        <div className="flex h-[12px] border-b-[3px] border-black bg-[#232323]">
          <span className="ml-[26px] flex-1 bg-[#12c022]" />
        </div>

        <div className="relative flex min-h-0 flex-1 flex-col border-l-[3px] border-black bg-[#232323] pl-[23px]">
          <div className="flex h-[51px] border-b-[3px] border-[#202020] bg-black">
            <div className="flex-1 rounded-tl-2xl border-t-[3px] border-[#c3d2cf] bg-linear-to-b from-[#a5c5bf] to-[#83aca5]" />
          </div>
          <TrackRow />
          <TrackRow />
          <TrackRow />
          <div className="h-[51px] border-b-[3px] border-[#202020] bg-[#262626]" />
          <div className="flex h-[204px] flex-col border-b-[6px] border-[#222222] bg-[#333333] pt-[30px] pl-[52px]">
            <Channel bars={LEFT_CHANNEL} />
            <div className="mt-[36px]"><Channel bars={RIGHT_CHANNEL} /></div>
          </div>
          <div className="flex-1 bg-[#303030]" />
          {/* playhead line */}
          <span className="absolute -top-[63px] bottom-0 left-[21px] w-[3px] bg-[#2d8ceb]" />
        </div>
      </div>

      <div className="w-[42px] overflow-hidden bg-[#232323] text-[#b1b1b1]">
        <div className="h-[120px] border-b-[3px] border-black pt-[66px] pl-[12px]">
          <button aria-label="Comp Marker Bin">
            <Svg w={32} h={42}><path d="M0 2q0-2 2-2h32v26L17 41 0 28z" /></Svg>
          </button>
        </div>
        <button aria-label="Comp Button" className="mt-[7px] ml-[2px]">
          <Svg w={40} h={38}>
            <path d="M2 24L22 4v20zM22 8h18v20H26" fill="none" stroke="currentColor" strokeWidth="3" />
            <path d="M22 8h18v20H22z" />
            <ellipse cx="20" cy="27" rx="10" ry="9" fill="#232323" stroke="currentColor" strokeWidth="3" />
          </Svg>
        </button>
      </div>
    </div>
  </div>
);

const TimelineFooter = () => (
  <footer className="flex h-[43px] shrink-0 overflow-hidden text-[32px] leading-[32px] text-[#a4a4a4]">
    <div className="flex w-[1919px] shrink-0 items-start border-t-[3px] border-black">
      <button aria-label="Layer Switches pane" className="ml-[11px] flex h-[60px] w-[51px] items-start rounded-md border-[3px] border-[#2e2e2e] bg-[#1e1e1e] pt-[5px] pl-[5px]">
        <Svg w={36} h={32} className="text-[#2d8ceb]">
          <path d="M21 7V2H2v17h5M27 13V8H8v17h5M14 14h19v17H14z" fill="none" stroke="currentColor" strokeWidth="3" />
          <circle cx="24" cy="23" r="4" />
        </Svg>
      </button>
      <button aria-label="Transfer Controls pane" className="mt-[6px] ml-[13px]">
        <Svg w={36} h={34} className="text-[#b1b1b1]">
          <circle cx="14" cy="12" r="11" fill="none" stroke="currentColor" strokeWidth="3" />
          <path d="M15 14h18v18H15z" fill="#232323" stroke="currentColor" strokeWidth="3" />
          <path d="M15 14h9v9h-9z" />
        </Svg>
      </button>
      <button aria-label="In/Out pane" className="mt-[6px] ml-[22px]">
        <Svg w={36} h={34} className="text-[#b1b1b1]">
          <path d="M8 0h20v10l8 6-8 6v12H8V22l-8-6 8-6z" />
          <path d="M14 0h9v12l6 4-6 4v14h-9V20l-6-4 6-4z" fill="#777" />
        </Svg>
      </button>
      <button aria-label="Render Time pane" className="mt-[9px] ml-[20px]">
        <Svg w={40} h={30} className="text-[#b1b1b1]">
          <circle cx="13" cy="12" r="12" />
          <path d="M0 27l8-5h16l4-16h4l-2 12 6-9 3 2q-6 16-12 17H0z" />
        </Svg>
      </button>
      <span className="mt-[8px] ml-[85px] w-[320px]">Frame Render Time:</span>
      <span className="mt-[8px] w-[157px] font-semibold text-[#6fdaa8]">0ms</span>
      <button className="flex h-[60px] w-[402px] items-start justify-center rounded-md border-[3px] border-[#2e2e2e] bg-[#1e1e1e] pt-[5px] text-[#8a8a8a]">
        Toggle Switches / Modes
      </button>
      <Svg w={30} h={14} className="mt-[14px] ml-[418px] text-[#b1b1b1]"><path d="M0 13l8-8 4 3 7-8 11 13z" /></Svg>
      <input
        type="range"
        aria-label="Timeline zoom"
        defaultValue={100}
        className="mt-[10px] ml-[47px] h-[32px] w-[132px] appearance-none bg-[linear-gradient(#4a4a4a,#4a4a4a)] bg-[length:100%_7px] bg-[position:0_8px] bg-no-repeat [&::-webkit-slider-thumb]:h-[30px] [&::-webkit-slider-thumb]:w-[30px] [&::-webkit-slider-thumb]:appearance-none [&::-webkit-slider-thumb]:rounded-full [&::-webkit-slider-thumb]:border-[6px] [&::-webkit-slider-thumb]:border-[#8f8f8f] [&::-webkit-slider-thumb]:bg-[#232323]"
      />
      <Svg w={50} h={22} className="mt-[12px] ml-[32px] text-[#b1b1b1]">
        <path d="M0 20L13 4q3-1 5 4L8 20zM13 20L31 0l19 20z" />
      </Svg>
    </div>
    <div className="flex-1 overflow-hidden bg-[#1d1d1d] pl-[3px]">
      <span className="mt-[3px] block h-[45px] w-[174px] rounded-full bg-[#333333]" />
    </div>
    <div className="w-[42px] bg-[#232323]" />
  </footer>
);

const TimelinePanel = () => (
  <section className="mt-[13px] ml-[3px] flex min-h-0 flex-1 flex-col border-t border-l-2 border-[#2a6099] bg-[#232323]">
    <div className="flex h-[77px] shrink-0 pl-[31px] text-[31px] leading-[42px]">
      <div className="flex h-full w-[282px] items-center border-b-[6px] border-[#b9b9b9] pt-[15px] text-[32px] text-[#b9b9b9]">
        <button aria-label="Close timeline tab"><Cross /></button>
        <span className="mb-[10px] ml-[29px] h-[30px] w-[31px] bg-[#a8977a]" />
        <span className="ml-[35px]">Comp 1</span>
        <span className="ml-auto"><Burger /></span>
      </div>
      <div className="ml-[113px] flex items-center pt-[9px] text-[#8a8a8a]">Render Queue</div>
    </div>
    <div className="flex min-h-0 flex-1">
      <LayerList />
      <Tracks />
    </div>
    <TimelineFooter />
  </section>
);

export default function App() {
  return (
    <div className="flex h-screen flex-col overflow-hidden bg-[#161616] font-['Open_Sans',sans-serif] text-[31px]">
      <TitleBar />
      <Toolbar />
      <main className="flex h-[908px] shrink-0 gap-[12px] pl-[3px]">
        <ProjectPanel />
        <CompositionPanel />
        <SidePanels />
      </main>
      <TimelinePanel />
    </div>
  );
}
